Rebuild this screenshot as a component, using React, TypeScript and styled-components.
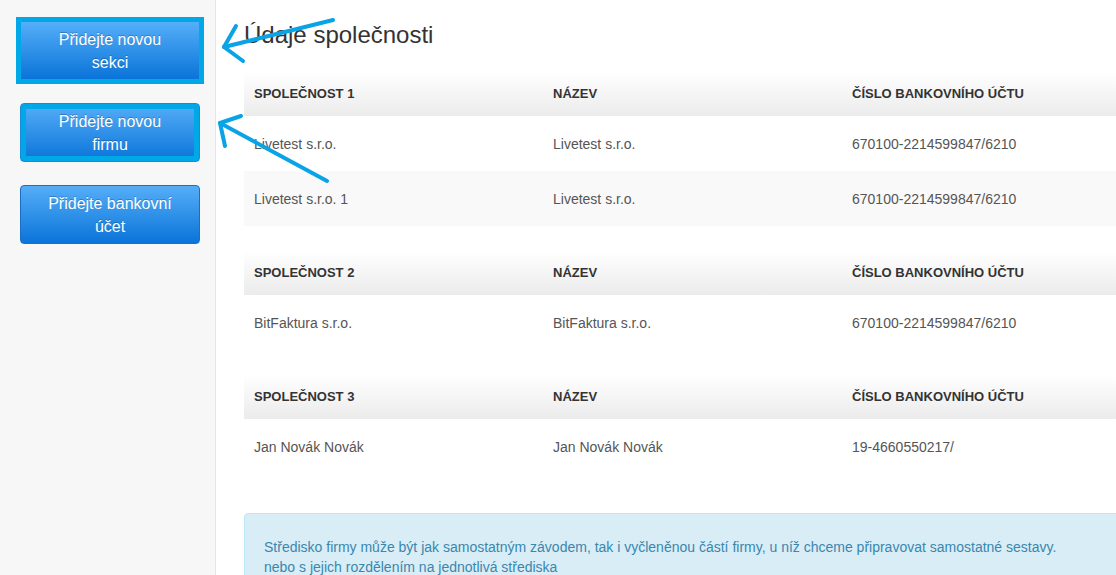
import styled, { createGlobalStyle, css } from "styled-components";

const GlobalStyle = createGlobalStyle`
    html, body {
        margin: 0;
        padding: 0;
        height: 100%;
        overflow: hidden;
        background: #fff;
    }
    body {
        font-family: "Liberation Sans", Arial, sans-serif;
        color: #333;
    }
`;

interface ICompanyTable {
    label: string;
    rows: { company: string; name: string; account: string }[];
}

const tables: ICompanyTable[] = [
    {
        label: "Společnost 1",
        rows: [
            { company: "Livetest s.r.o.", name: "Livetest s.r.o.", account: "670100-2214599847/6210" },
            { company: "Livetest s.r.o. 1", name: "Livetest s.r.o.", account: "670100-2214599847/6210" },
        ],
    },
    {
        label: "Společnost 2",
        rows: [{ company: "BitFaktura s.r.o.", name: "BitFaktura s.r.o.", account: "670100-2214599847/6210" }],
    },
    {
        label: "Společnost 3",
        rows: [{ company: "Jan Novák Novák", name: "Jan Novák Novák", account: "19-4660550217/" }],
    },
];

function App() {
    return (
        <>
            <GlobalStyle />
            <Page>
                <Sidebar>
                    <ActionButton $frame="outer">Přidejte novou sekci</ActionButton>
                    <ActionButton $frame="inner">Přidejte novou firmu</ActionButton>
                    <ActionButton>Přidejte bankovní účet</ActionButton>
                </Sidebar>
                <Main>
                    <Title>Údaje společnosti</Title>
                    {tables.map((table) => (
                        <Table key={table.label}>
                            <colgroup>
                                <col style={{ width: 299 }} />
                                <col style={{ width: 299 }} />
                                <col />
                            </colgroup>
                            <thead>
                                <tr>
                                    <Th>{table.label}</Th>
                                    <Th>Název</Th>
                                    <Th>Číslo bankovního účtu</Th>
                                </tr>
                            </thead>
                            <tbody>
                                {table.rows.map((row, i) => (
                                    <Row key={i} $striped={i % 2 === 1}>
                                        <Td>{row.company}</Td>
                                        <Td>{row.name}</Td>
                                        <Td>{row.account}</Td>
                                    </Row>
                                ))}
                            </tbody>
                        </Table>
                    ))}
                    <Alert>
                        Středisko firmy může být jak samostatným závodem, tak i vyčleněnou částí firmy, u níž chceme
                        připravovat samostatné sestavy.
                        <br />
                        nebo s jejich rozdělením na jednotlivá střediska
                    </Alert>
                </Main>
                <Annotations width="1116" height="575" viewBox="0 0 1116 575">
                    <g fill="none" stroke="#0aa3e6" strokeWidth="4" strokeLinecap="round" strokeLinejoin="round">
                        <path d="M333 20 L224 47" />
                        <path d="M236 26 L224 47 L243 61" />
                        <path d="M327 181 L220 123" />
                        <path d="M241 116 L220 123 L225 146" />
                    </g>
                </Annotations>
            </Page>
        </>
    );
}

const Page = styled.div`
    position: relative;
    display: flex;
    width: 1116px;
    height: 575px;
    overflow: hidden;
`;

const Sidebar = styled.aside`
    flex: 0 0 216px;
    box-sizing: border-box;
    display: flex;
    flex-direction: column;
    align-items: flex-start;
    gap: 23px;
    padding: 21px 0 0 20px;
    background: #f7f7f7;
    border-right: 1px solid #dfe6ee;
`;

const ActionButton = styled.button<{ $frame?: "outer" | "inner" }>`
    width: 180px;
    height: 59px;
    padding: 6px 20px;
    box-sizing: border-box;
    font-family: "Liberation Sans", Arial, sans-serif;
    font-size: 16px;
    line-height: 23px;
    color: #fff;
    text-align: center;
    text-shadow: 0 -1px 0 rgba(0, 0, 0, 0.25);
    background: linear-gradient(#55aef8, #0a74d9);
    border: 1px solid #1b6fc2;
    border-radius: 4px;
    cursor: pointer;

    ${({ $frame }) =>
        $frame === "outer" &&
        css`
            outline: 5px solid #00a8e8;
            outline-offset: -1px;
            border-radius: 0;
        `}

    ${({ $frame }) =>
        $frame === "inner" &&
        css`
            box-shadow: inset 0 0 0 5px #00a8e8;
            border-color: #1a8ad8;
        `}
`;

const Main = styled.main`
    flex: 1;
    min-width: 0;
    padding: 22px 0 0 28px;
`;

const Title = styled.h1`
    margin: 0 0 24px;
    font-size: 24px;
    font-weight: normal;
    line-height: 26px;
    color: #333;
`;

const Table = styled.table`
    width: 1000px;
    table-layout: fixed;
    border-collapse: collapse;
    margin-bottom: 25px;
`;

const Th = styled.th`
    padding: 14px 10px;
    height: 44px;
    box-sizing: border-box;
    text-align: left;
    font-size: 13px;
    font-weight: bold;
    line-height: 16px;
    text-transform: uppercase;
    color: #333;
    background: linear-gradient(#fff, #ebebeb);
`;

const Row = styled.tr<{ $striped: boolean }>`
    background: ${({ $striped }) => ($striped ? "#f9f9f9" : "#fff")};

    & + & td {
        border-top: 1px solid #ddd;
    }
`;

const Td = styled.td`
    padding: 18px 10px 17px;
    font-size: 14px;
    line-height: 20px;
    color: #555;
`;

const Alert = styled.div`
    width: 1000px;
    margin-top: 39px;
    padding: 23px 19px;
    box-sizing: border-box;
    font-size: 14px;
    line-height: 20px;
    color: #3a87ad;
    background: #d9edf7;
    border: 1px solid #bce8f1;
    border-radius: 4px;
`;

const Annotations = styled.svg`
    position: absolute;
    top: 0;
    left: 0;
    pointer-events: none;
`;

export default App;
